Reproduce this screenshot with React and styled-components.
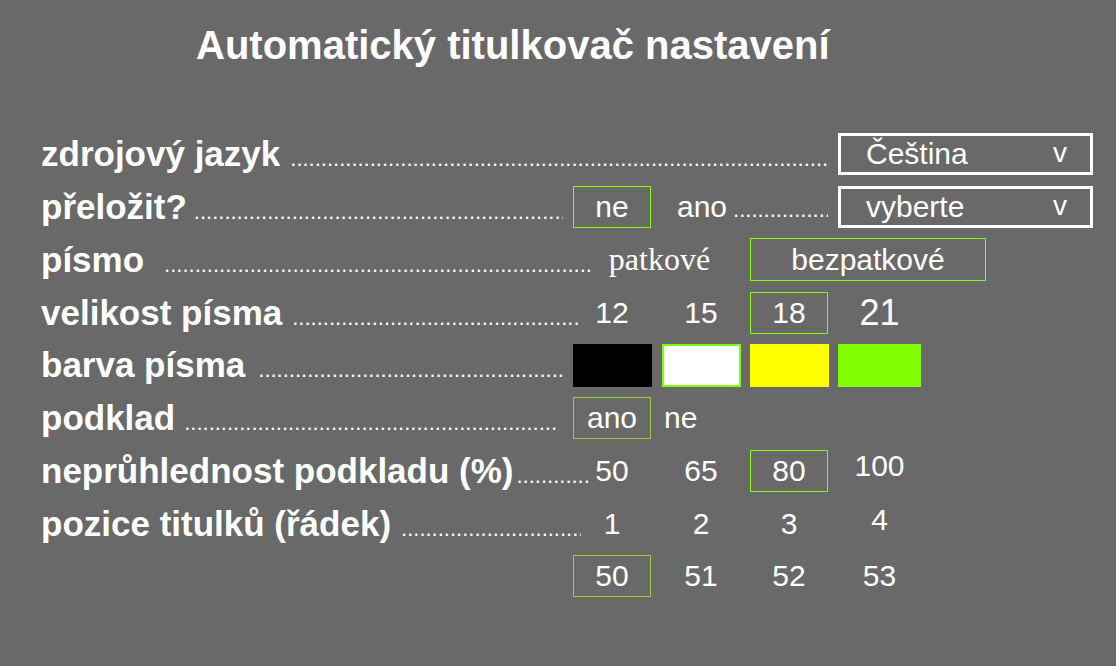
import styled, { createGlobalStyle } from "styled-components";

const GlobalStyle = createGlobalStyle`
  body {
    margin: 0;
    background: #696969;
    color: #fff;
    font-family: "Liberation Sans", Arial, sans-serif;
  }
`;

const BRIGHT = "#7fff00";
const MUTED = "#9acd32";
const DOTS = ".".repeat(140);

const Page = styled.div`
  min-height: 666px;
  box-sizing: border-box;
  padding: 22px 0 0 41px;
`;

const Title = styled.h1`
  margin: 0 0 60px 155px;
  font-size: 40px;
  line-height: 46px;
  font-weight: 700;
`;

const Row = styled.div`
  display: grid;
  grid-template-columns: 532px 89px 88px 88px 1fr;
  height: 52.75px;
  align-items: center;
`;

const LabelCell = styled.div`
  grid-column: ${(props) => props.$span || "1 / 2"};
  display: flex;
  align-items: baseline;
  min-width: 0;
`;

const Label = styled.span`
  font-size: 35px;
  font-weight: 700;
  white-space: nowrap;
`;

const Leader = styled.span`
  flex: 1;
  min-width: 0;
  overflow: clip;
  white-space: nowrap;
  font-size: 22px;
  margin-left: ${(props) => props.$start ?? 10}px;
  margin-right: ${(props) => props.$end ?? 10}px;
`;

const Option = styled.div`
  grid-column: ${(props) => props.$col};
  width: ${(props) => (props.$wide ? 83 : 78)}px;
  height: 42px;
  box-sizing: border-box;
  display: flex;
  align-items: center;
  justify-content: ${(props) => (props.$left ? "flex-start" : "center")};
  padding-left: ${(props) => (props.$left ? 1 : 0)}px;
  padding-bottom: ${(props) => (props.$raise || 0) * 2}px;
  font-size: ${(props) => props.$size || 30}px;
  border: 1px solid ${(props) => props.$border || "transparent"};
  white-space: nowrap;
`;

const SerifOption = styled.div`
  grid-column: 2 / 4;
  padding-right: 4px;
  text-align: center;
  font-family: "Liberation Serif", "Times New Roman", serif;
  font-size: 32px;
`;

const WideBox = styled.div`
  grid-column: 4 / 6;
  width: 236px;
  height: 43px;
  box-sizing: border-box;
  border: 1px solid ${BRIGHT};
  display: flex;
  align-items: center;
  justify-content: center;
  font-size: 30px;
`;

const InlineCell = styled.div`
  grid-column: 3 / 5;
  display: flex;
  align-items: baseline;
  padding-left: 15px;
  font-size: 30px;
  min-width: 0;
`;

const Select = styled.div`
  grid-column: 5;
  width: 255px;
  height: 42px;
  box-sizing: border-box;
  border: 3px solid #fff;
  display: flex;
  align-items: center;
  justify-content: space-between;
  padding: 0 23px 0 25px;
  font-size: 30px;
`;

const Caret = styled.span`
  font-size: 28px;
  padding-bottom: 3px;
`;

const Swatch = styled.div`
  grid-column: ${(props) => props.$col};
  width: ${(props) => (props.$wide ? 83 : 79)}px;
  height: 43px;
  box-sizing: border-box;
  background: ${(props) => props.$color};
  border: 2px solid ${(props) => props.$border || props.$color};
`;

function LabelWithDots({ text, start, end, span }) {
  return (
    <LabelCell $span={span}>
      {text && <Label>{text}</Label>}
      <Leader $start={start} $end={end}>
        {DOTS}
      </Leader>
    </LabelCell>
  );
}

export default function App() {
  return (
    <>
      <GlobalStyle />
      <Page>
        <Title>Automatický titulkovač nastavení</Title>

        <Row>
          <LabelWithDots text="zdrojový jazyk" span="1 / 5" end={8} />
          <Select>
            <span>Čeština</span>
            <Caret>v</Caret>
          </Select>
        </Row>

        <Row>
          <LabelWithDots text="přeložit?" start={7} />
          <Option $col={2} $border={BRIGHT}>
            ne
          </Option>
          <InlineCell>
            <span>ano</span>
            <Leader $start={6} $end={10}>
              {DOTS}
            </Leader>
          </InlineCell>
          <Select>
            <span>vyberte</span>
            <Caret>v</Caret>
          </Select>
        </Row>

        <Row>
          <LabelWithDots text="písmo" start={20} end={-20} />
          <SerifOption>patkové</SerifOption>
          <WideBox>bezpatkové</WideBox>
        </Row>

        <Row>
          <LabelWithDots text="velikost písma" end={-5} />
          <Option $col={2}>12</Option>
          <Option $col={3}>15</Option>
          <Option $col={4} $border={BRIGHT}>
            18
          </Option>
          <Option $col={5} $wide $size={36}>
            21
          </Option>
        </Row>

        <Row>
          <LabelWithDots text="barva písma" start={13} end={8} />
          <Swatch $col={2} $color="#000" />
          <Swatch $col={3} $color="#fff" $border={BRIGHT} />
          <Swatch $col={4} $color="#ffff00" />
          <Swatch $col={5} $color="#80ff00" $wide />
        </Row>

        <Row>
          <LabelWithDots text="podklad" start={9} end={16} />
          <Option $col={2} $border={MUTED}>
            ano
          </Option>
          <Option $col={3} $left>
            ne
          </Option>
        </Row>

        <Row>
          <LabelWithDots text="neprůhlednost podkladu (%)" start={3} end={-18} />
          <Option $col={2}>50</Option>
          <Option $col={3}>65</Option>
          <Option $col={4} $border={BRIGHT}>
            80
          </Option>
          <Option $col={5} $wide $raise={5}>
            100
          </Option>
        </Row>

        <Row>
          <LabelWithDots text="pozice titulků (řádek)" start={10} end={-8} />
          <Option $col={2}>1</Option>
          <Option $col={3}>2</Option>
          <Option $col={4}>3</Option>
          <Option $col={5} $wide $raise={4}>
            4
          </Option>
        </Row>

        <Row>
          <Option $col={2} $border={MUTED}>
            50
          </Option>
          <Option $col={3}>51</Option>
          <Option $col={4}>52</Option>
          <Option $col={5} $wide>
            53
          </Option>
        </Row>
      </Page>
    </>
  );
}
